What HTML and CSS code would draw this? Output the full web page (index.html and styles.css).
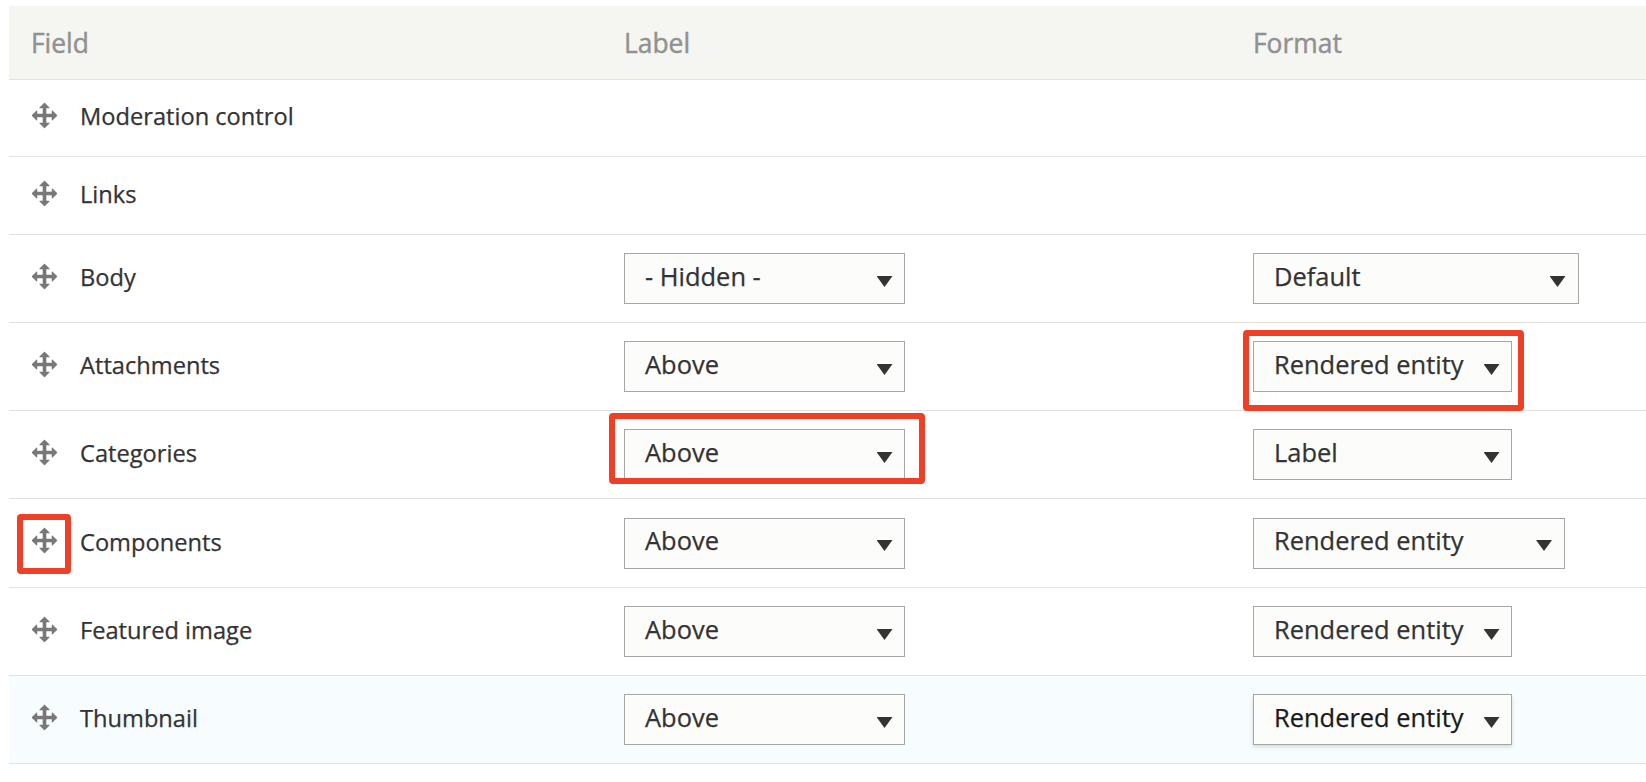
FILE: index.html
```html
<!DOCTYPE html>
<html lang="en">
<head>
<meta charset="utf-8">
<title>Manage display</title>
<link rel="stylesheet" href="styles.css">
</head>
<body>
<svg class="sprite" width="0" height="0">
  <symbol id="move" viewBox="0 0 16 16"><path d="M14.904 7.753l-2.373-2.372c-.291-.292-.529-.193-.529.22v1.399h-3v-3h1.398c.414 0 .512-.239.221-.53l-2.371-2.372c-.137-.136-.36-.136-.497 0l-2.372 2.372c-.292.292-.193.53.22.53h1.399v3h-3v-1.369c0-.413-.239-.511-.53-.22l-2.372 2.372c-.136.136-.136.359 0 .494l2.372 2.372c.291.292.53.193.53-.22v-1.429h3v3h-1.4c-.413 0-.511.238-.22.529l2.374 2.373c.137.137.36.137.495 0l2.373-2.373c.29-.291.19-.529-.223-.529h-1.399v-3h3v1.4c0 .413.238.511.529.22l2.373-2.374c.137-.135.137-.358 0-.495z"/></symbol>
</svg>
<div class="table">
  <div class="row head"><div>Field</div><div>Label</div><div>Format</div></div>
  <div class="row plain first">
    <div class="field"><span class="handle"><svg><use href="#move"/></svg></span><span class="name">Moderation control</span></div>
  </div>
  <div class="row plain">
    <div class="field"><span class="handle"><svg><use href="#move"/></svg></span><span class="name">Links</span></div>
  </div>
  <div class="row">
    <div class="field"><span class="handle"><svg><use href="#move"/></svg></span><span class="name">Body</span></div>
    <div class="cell"><div class="select label">- Hidden -</div></div>
    <div class="cell"><div class="select widest">Default</div></div>
  </div>
  <div class="row">
    <div class="field"><span class="handle"><svg><use href="#move"/></svg></span><span class="name">Attachments</span></div>
    <div class="cell"><div class="select label">Above</div></div>
    <div class="cell"><div class="select">Rendered entity</div><i class="mark mark-format"></i></div>
  </div>
  <div class="row">
    <div class="field"><span class="handle"><svg><use href="#move"/></svg></span><span class="name">Categories</span></div>
    <div class="cell"><div class="select label">Above</div><i class="mark mark-label"></i></div>
    <div class="cell"><div class="select">Label</div></div>
  </div>
  <div class="row tall">
    <div class="field"><span class="handle"><svg><use href="#move"/></svg></span><span class="name">Components</span><i class="mark mark-handle"></i></div>
    <div class="cell"><div class="select label">Above</div></div>
    <div class="cell"><div class="select wide">Rendered entity</div></div>
  </div>
  <div class="row">
    <div class="field"><span class="handle"><svg><use href="#move"/></svg></span><span class="name">Featured image</span></div>
    <div class="cell"><div class="select label">Above</div></div>
    <div class="cell"><div class="select">Rendered entity</div></div>
  </div>
  <div class="row hover">
    <div class="field"><span class="handle"><svg><use href="#move"/></svg></span><span class="name">Thumbnail</span></div>
    <div class="cell"><div class="select label">Above</div></div>
    <div class="cell"><div class="select active">Rendered entity</div></div>
  </div>
</div>
</body>
</html>
```
FILE: styles.css
```css
* { box-sizing: border-box; }
body {
  margin: 0;
  overflow: hidden;
  background: #fff;
  color: #333;
  font-family: "Open Sans", "Noto Sans", sans-serif;
  -webkit-text-stroke: 0.25px;
}
.sprite { display: block; }
.table { padding: 6px 0 0 9px; }
.row {
  display: grid;
  grid-template-columns: 615px 629px 1fr;
  height: 88px;
  border-bottom: 1px solid #e2e3df;
}
.row.plain { height: 78px; }
.row.first { height: 77px; }
.row.tall { height: 89px; }
.row.hover { background: #f7fcff; }
.row.head {
  height: 74px;
  background: #f5f5f1;
  color: #919191;
  font-size: 26.4px;
  line-height: 74px;
  -webkit-text-stroke: 0.45px;
}
.head > div:first-child { padding-left: 22px; }
.field {
  position: relative;
  display: flex;
  align-items: flex-start;
  gap: 21px;
  padding: 27px 0 0 21px;
}
.plain .field { padding-top: 22px; }
.first .field { padding-top: 21px; }
.handle { display: flex; width: 29px; height: 29px; }
.handle svg { width: 29px; height: 29px; fill: #787878; }
.name { font-size: 23.65px; line-height: 30px; }
.tall .name { line-height: 32px; }
.cell { position: relative; padding-top: 18px; }
.tall .cell { padding-top: 19px; }
.select {
  display: flex;
  justify-content: space-between;
  width: 259px;
  height: 51px;
  padding: 0 11.5px 0 20px;
  border: 1px solid #a6a6a6;
  background: #fcfcfa;
  font-size: 25.45px;
  line-height: 45px;
  white-space: nowrap;
}
.select::after {
  content: "";
  width: 16px;
  height: 11px;
  margin-top: 22px;
  background: #333;
  clip-path: polygon(0 0, 100% 0, 50% 100%);
}
.select.label { width: 281px; }
.select.wide { width: 312px; padding-right: 12px; }
.select.widest { width: 326px; padding-right: 12.5px; }
.select.active { color: #1a1a1a; box-shadow: 0 2px 4px rgba(0, 0, 0, .14); }
.tall .select { line-height: 43px; }
.tall .select::after { margin-top: 21px; }
.mark {
  position: absolute;
  border: 6px solid #ee4026;
  border-radius: 4px;
}
.mark-handle { left: 8px; top: 15px; width: 54px; height: 60px; }
.mark-label { left: -15px; top: 2px; width: 316px; height: 71px; }
.mark-format { left: -10px; top: 7px; width: 281px; height: 81px; }
```
